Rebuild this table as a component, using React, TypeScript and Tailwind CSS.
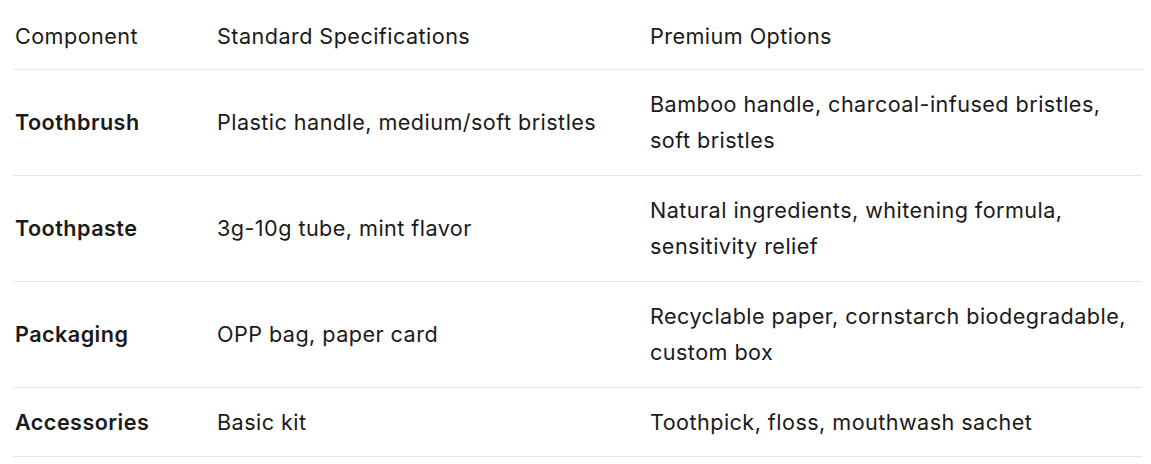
const rows = [
  {
    name: "Toothbrush",
    standard: "Plastic handle, medium/soft bristles",
    premium: "Bamboo handle, charcoal-infused bristles, soft bristles",
  },
  {
    name: "Toothpaste",
    standard: "3g-10g tube, mint flavor",
    premium: "Natural ingredients, whitening formula, sensitivity relief",
  },
  {
    name: "Packaging",
    standard: "OPP bag, paper card",
    premium: "Recyclable paper, cornstarch biodegradable, custom box",
  },
  {
    name: "Accessories",
    standard: "Basic kit",
    premium: "Toothpick, floss, mouthwash sachet",
  },
];

export default function App() {
  return (
    <div className="min-h-[464px] bg-white pl-[13px] font-['Inter',sans-serif] text-[21.6px] leading-[36.5px] tracking-[0.45px] text-[#1a1a1a]">
      <table className="w-[1129px] table-fixed border-collapse text-left">
        <colgroup>
          <col className="w-[202px]" />
          <col className="w-[433px]" />
          <col />
        </colgroup>
        <thead>
          <tr className="border-b border-[#e6e6e6]">
            <th className="pt-[18px] pb-[14px] pl-[2px] font-normal">Component</th>
            <th className="pt-[18px] pb-[14px] pl-[2px] font-normal">Standard Specifications</th>
            <th className="pt-[18px] pb-[14px] pl-[2px] font-normal">Premium Options</th>
          </tr>
        </thead>
        <tbody>
          {rows.map((row) => (
            <tr key={row.name} className="border-b border-[#e6e6e6] align-middle">
              <td className="py-4 pl-[2px] font-semibold">{row.name}</td>
              <td className="py-4 pl-[2px]">{row.standard}</td>
              <td className="py-4 pl-[2px] pr-[8px]">{row.premium}</td>
            </tr>
          ))}
        </tbody>
      </table>
    </div>
  );
}
